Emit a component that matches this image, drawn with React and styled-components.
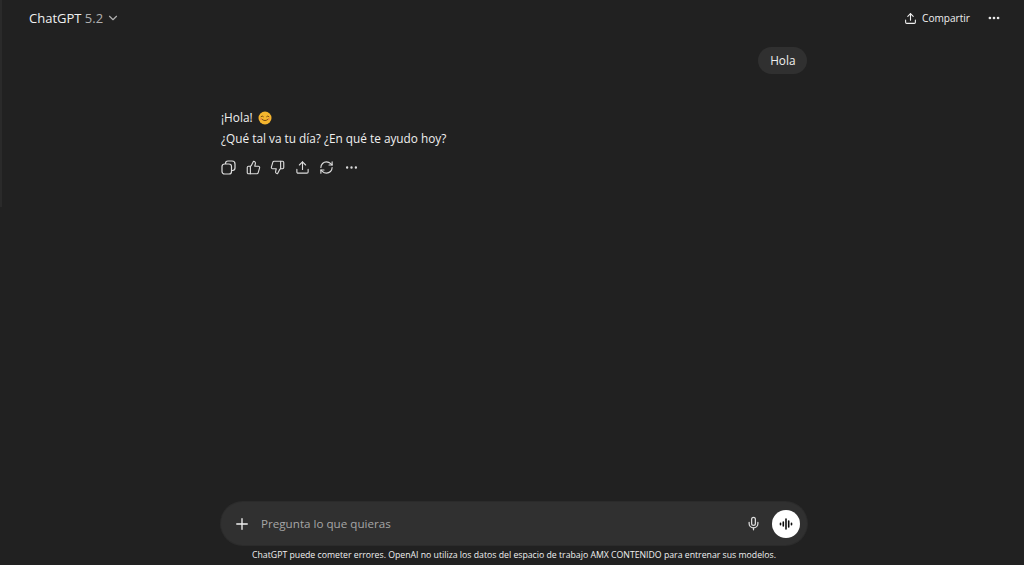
import React from 'react';
import styled, { createGlobalStyle } from 'styled-components';
import { ChevronDown, ThumbsUp, ThumbsDown, Upload, RefreshCw, Ellipsis, Plus, Mic } from 'lucide-react';

const GlobalStyle = createGlobalStyle`
  html, body {
    margin: 0;
    height: 100%;
    background-color: #212121;
    overflow: hidden;
  }
`;

const Page = styled.div`
  background-color: #212121;
  color: #f0f0f0;
  display: flex;
  font-family: "Open Sans", "Noto Sans", sans-serif;
  height: 565px;
  width: 1024px;
`;

const Rail = styled.div`
  background-color: #2a2a2a;
  height: 207px;
  width: 2px;
`;

const Content = styled.div`
  display: flex;
  flex: 1;
  flex-direction: column;
  padding-left: 2px;
`;

const Header = styled.header`
  align-items: center;
  display: flex;
  height: 36px;
  justify-content: space-between;
  padding: 0 23px 0 25px;
`;

const ModelPicker = styled.div`
  align-items: center;
  display: flex;
  font-size: 13px;
  gap: 2.5px;
`;

const ModelVersion = styled.span`
  color: #b0b0b0;
`;

const HeaderActions = styled.div`
  align-items: center;
  display: flex;
  gap: 17px;
`;

const ShareButton = styled.div`
  align-items: center;
  display: flex;
  font-size: 10.1px;
  gap: 5px;
`;

const Thread = styled.main`
  display: flex;
  flex: 1;
  flex-direction: column;
  margin: 0 auto;
  padding-top: 11px;
  width: 586px;
`;

const UserBubble = styled.div`
  align-self: flex-end;
  background-color: #303030;
  border-radius: 14px;
  font-size: 11.8px;
  line-height: 27px;
  padding: 0 11.5px 0 12.5px;
`;

const Answer = styled.div`
  font-size: 11.8px;
  line-height: 21px;
  margin-top: 33px;
`;

const Line = styled.div`
  align-items: center;
  display: flex;
  gap: 5px;
`;

const Toolbar = styled.div`
  align-items: center;
  display: flex;
  gap: 9.5px;
  margin-top: 11px;
`;

const Composer = styled.div`
  align-items: center;
  background-color: #303030;
  border-radius: 22px;
  box-shadow: 0 0 0 1px #2b2b2b;
  box-sizing: border-box;
  display: flex;
  height: 43px;
  margin: 0 auto;
  padding: 0 7px 0 12px;
  width: 586px;
`;

const Placeholder = styled.span`
  color: #a6a6a6;
  flex: 1;
  font-size: 11.65px;
  margin-left: 10px;
`;

const VoiceButton = styled.div`
  align-items: center;
  background-color: #ffffff;
  border-radius: 50%;
  display: flex;
  height: 28px;
  justify-content: center;
  margin-left: 11px;
  width: 28px;
`;

const Disclaimer = styled.div`
  font-size: 8.72px;
  line-height: 20px;
  text-align: center;
`;

const Smile = () => (
  <svg width="14" height="14" viewBox="0 0 14 14">
    <circle cx="7" cy="7" r="6.5" fill="#f5b52e" />
    <path d="M3 5.6q1.2-1.4 2.4 0M8.6 5.6q1.2-1.4 2.4 0" fill="none" stroke="#7a4a10" strokeWidth="1" strokeLinecap="round" />
    <path d="M3.6 8q3.4 3.4 6.8 0" fill="none" stroke="#7a4a10" strokeWidth="1" strokeLinecap="round" />
    <ellipse cx="3" cy="8" rx="1.3" ry=".8" fill="#f08a4b" />
    <ellipse cx="11" cy="8" rx="1.3" ry=".8" fill="#f08a4b" />
  </svg>
);

const Waveform = () => (
  <svg width="14" height="14" viewBox="0 0 14 14" fill="none" stroke="#0d0d0d" strokeWidth="1.6" strokeLinecap="round">
    <path d="M1.5 6.2v1.6M4.3 5v4M7 2v10M9.7 4v6M12.5 6.2v1.6" />
  </svg>
);

// back square sits up and to the right, front one down and to the left
const CopyIcon = () => (
  <svg width="15" height="15" viewBox="0 0 15 15" fill="none" stroke="#dcdcdc" strokeWidth="1.2">
    <rect x="1" y="4" width="9.5" height="10" rx="2.6" />
    <path d="M4.5 4V3.4A2.4 2.4 0 0 1 6.9 1h4.2a2.9 2.9 0 0 1 2.9 2.9v4.2a2.4 2.4 0 0 1-2.4 2.4h-1.1" />
  </svg>
);

const toolIcons = [ThumbsUp, ThumbsDown, Upload, RefreshCw, Ellipsis];

const App = () => (
  <Page>
    <GlobalStyle />
    <Rail />
    <Content>
      <Header>
        <ModelPicker>
          <span>ChatGPT <ModelVersion>5.2</ModelVersion></span>
          <ChevronDown size={14} color="#b0b0b0" />
        </ModelPicker>
        <HeaderActions>
          <ShareButton>
            <Upload size={13} />
            Compartir
          </ShareButton>
          <Ellipsis size={14} strokeWidth={2.6} />
        </HeaderActions>
      </Header>
      <Thread>
        <UserBubble>Hola</UserBubble>
        <Answer>
          <Line>¡Hola! <Smile /></Line>
          <Line>¿Qué tal va tu día? ¿En qué te ayudo hoy?</Line>
        </Answer>
        <Toolbar>
          <CopyIcon />
          {toolIcons.map((Icon, i) => <Icon key={i} size={15} color="#dcdcdc" strokeWidth={1.8} />)}
        </Toolbar>
      </Thread>
      <Composer>
        <Plus size={18} strokeWidth={1.8} />
        <Placeholder>Pregunta lo que quieras</Placeholder>
        <Mic size={15} color="#dcdcdc" />
        <VoiceButton><Waveform /></VoiceButton>
      </Composer>
      <Disclaimer>ChatGPT puede cometer errores. OpenAI no utiliza los datos del espacio de trabajo AMX CONTENIDO para entrenar sus modelos.</Disclaimer>
    </Content>
  </Page>
);

export default App;
